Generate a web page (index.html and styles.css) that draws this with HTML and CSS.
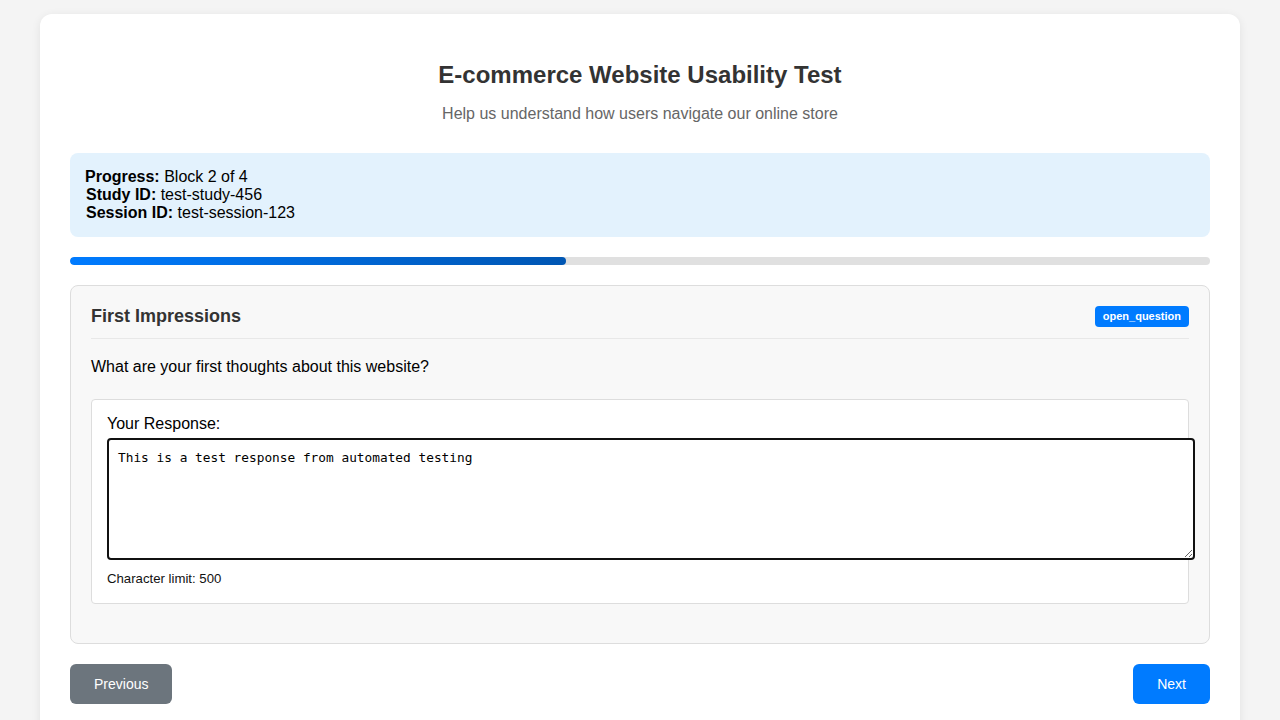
FILE: index.html
```html
<!DOCTYPE html>
<html lang="en">
<head>
<meta charset="utf-8">
<title>E-commerce Website Usability Test</title>
<link rel="stylesheet" href="styles.css">
</head>
<body>
<div class="container">
  <header class="header">
    <h1 class="title">E-commerce Website Usability Test</h1>
    <p class="subtitle">Help us understand how users navigate our online store</p>
  </header>

  <div class="info-box">
    <div><strong>Progress:</strong> Block 2 of 4</div>
    <div class="info-line"><strong>Study ID:</strong> test-study-456</div>
    <div class="info-line"><strong>Session ID:</strong> test-session-123</div>
  </div>

  <div class="progress-track">
    <div class="progress-fill" style="width: 43.5%"></div>
  </div>

  <section class="block">
    <div class="block-header">
      <h2 class="block-title">First Impressions</h2>
      <span class="badge">open_question</span>
    </div>
    <p class="question">What are your first thoughts about this website?</p>
    <div class="response">
      <label class="response-label" for="resp">Your Response:</label>
      <textarea id="resp" class="response-input">This is a test response from automated testing</textarea>
      <div class="char-limit">Character limit: 500</div>
    </div>
  </section>

  <div class="nav">
    <button class="btn btn-prev">Previous</button>
    <button class="btn btn-next">Next</button>
  </div>
</div>
</body>
</html>
```

FILE: styles.css
```css
* { box-sizing: border-box; }

body {
  margin: 0;
  padding: 14px 40px;
  background: #f4f4f4;
  font-family: "Liberation Sans", Arial, sans-serif;
  color: #000;
}

.container {
  background: #fff;
  border-radius: 12px;
  box-shadow: 0 2px 10px rgba(0, 0, 0, 0.08);
  padding: 30px 30px 40px;
}

.header {
  text-align: center;
  margin-bottom: 30px;
}

.title {
  margin: 17px 0 16px;
  font-size: 24px;
  line-height: 28px;
  font-weight: bold;
  color: #333;
}

.subtitle {
  margin: 0;
  font-size: 16px;
  line-height: 18px;
  color: #666;
}

.info-box {
  background: #e3f2fd;
  border-radius: 8px;
  padding: 15px;
  font-size: 16px;
  line-height: 18px;
}

.info-line { padding-left: 1px; }

.progress-track {
  margin: 20px 0;
  height: 8px;
  background: #e0e0e0;
  border-radius: 4px;
  overflow: hidden;
}

.progress-fill {
  height: 100%;
  background: linear-gradient(90deg, #007bff, #0056b3);
  border-radius: 4px;
}

.block {
  background: #f8f8f8;
  border: 1px solid #ddd;
  border-radius: 8px;
  padding: 20px;
}

.block-header {
  display: flex;
  justify-content: space-between;
  align-items: center;
  padding-bottom: 11px;
  border-bottom: 1px solid #e8e8e8;
  margin-bottom: 19px;
}

.block-title {
  margin: 0;
  font-size: 18px;
  line-height: 21px;
  font-weight: bold;
  color: #333;
}

.badge {
  background: #007bff;
  color: #fff;
  font-size: 11px;
  line-height: 13px;
  font-weight: bold;
  padding: 4px 8px;
  border-radius: 4px;
}

.question {
  margin: 0 0 23px;
  font-size: 16px;
  line-height: 18px;
}

.response {
  background: #fff;
  border: 1px solid #ddd;
  border-radius: 4px;
  padding: 15px 15px 17px;
  margin-bottom: 19px;
}

.response-label {
  display: block;
  font-size: 16px;
  line-height: 18px;
  margin-bottom: 5px;
}

.response-input {
  display: block;
  box-sizing: content-box;
  width: 100%;
  height: 100px;
  padding: 10px 9px 8px;
  border: 2px solid #111;
  border-radius: 4px;
  font-family: "DejaVu Sans Mono", monospace;
  font-size: 12.8px;
  line-height: 16px;
  color: #000;
  background: #fff;
  outline: none;
  resize: both;
}

.char-limit {
  margin-top: 11px;
  font-size: 13.2px;
  line-height: 15px;
  color: #111;
}

.nav {
  display: flex;
  justify-content: space-between;
  margin-top: 20px;
}

.btn {
  border: none;
  border-radius: 6px;
  height: 40px;
  padding: 0 24px;
  font-family: "Liberation Sans", Arial, sans-serif;
  font-size: 14px;
  color: #fff;
  cursor: pointer;
}

.btn-prev { background: #6c757d; }
.btn-next { background: #007bff; }
```
